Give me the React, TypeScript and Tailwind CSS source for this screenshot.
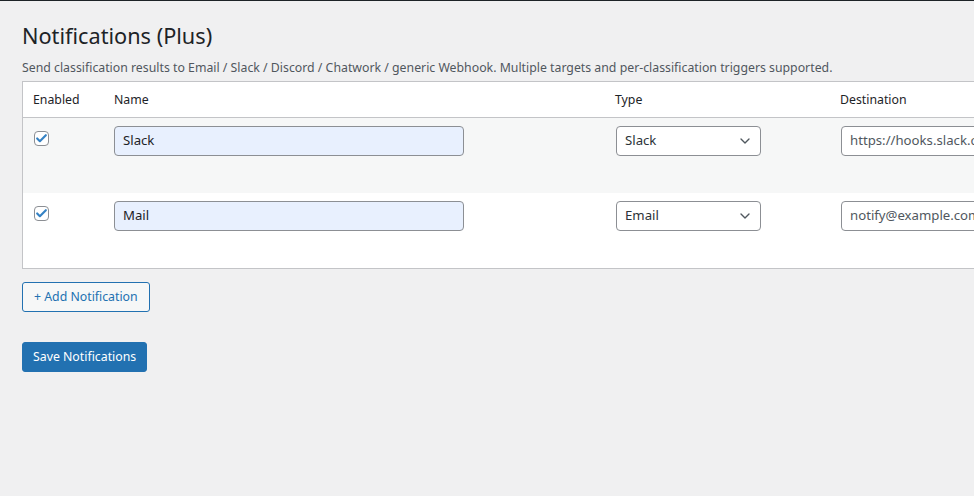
import { Check, ChevronDown } from "lucide-react";

const rows = [
  { name: "Slack", type: "Slack", dest: "https://hooks.slack.com/services/T000/B000/XXXX", bg: "bg-[#f6f7f7]" },
  { name: "Mail", type: "Email", dest: "notify@example.com", bg: "bg-white" },
];

export default function App() {
  return (
    <div
      className="min-h-screen w-full overflow-hidden bg-[#f0f0f1] border-t border-[#1d2327] text-[#3c434a] text-[12.3px]"
      style={{ fontFamily: '"Noto Sans", "Open Sans", sans-serif' }}
    >
      <div className="pl-[22px] pt-[20px]">
        <h1 className="text-[21.7px] leading-[29px] font-normal text-[#1d2327]">Notifications (Plus)</h1>
        <p className="mt-[9px] text-[12.3px] leading-[18px] text-[#50575e]">
          Send classification results to Email / Slack / Discord / Chatwork / generic Webhook. Multiple targets and per-classification triggers supported.
        </p>

        {/* Notifications table */}
        <div className="mt-[4px] w-[1100px] border border-[#c3c4c7] bg-white">
          <div className="grid grid-cols-[81px_501px_225px_1fr] h-[36px] items-center border-b border-[#c3c4c7] text-[#1d2327]">
            <span className="pl-[10px] pt-[1px]">Enabled</span>
            <span className="pl-[10px] pt-[1px]">Name</span>
            <span className="pl-[10px] pt-[1px]">Type</span>
            <span className="pl-[10px] pt-[1px]">Destination</span>
          </div>

          {rows.map((r) => (
            <div key={r.name} className={`grid grid-cols-[81px_501px_225px_1fr] h-[75px] items-start ${r.bg}`}>
              <div className="pl-[11px] pt-[13px]">
                <span className="flex h-[15px] w-[15px] items-center justify-center rounded-[4px] border border-[#8c8f94] bg-white">
                  <Check className="h-[13px] w-[13px] text-[#3582c4]" strokeWidth={4} />
                </span>
              </div>
              <div className="pl-[10px] pt-[8px]">
                <div className="flex h-[30px] w-[350px] items-center rounded-[4px] border border-[#8c8f94] bg-[#e8f0fe] px-[8px] text-[13.2px] text-[#1d2327]">
                  {r.name}
                </div>
              </div>
              <div className="pl-[11px] pt-[8px]">
                <div className="flex h-[30px] w-[145px] items-center justify-between rounded-[4px] border border-[#8c8f94] bg-white pl-[8px] pr-[7px] text-[13.2px] text-[#2c3338]">
                  <span>{r.type}</span>
                  <ChevronDown className="h-[16px] w-[16px] text-[#50575e]" strokeWidth={2} />
                </div>
              </div>
              <div className="pl-[11px] pt-[8px]">
                <div className="flex h-[30px] w-[300px] items-center overflow-hidden whitespace-nowrap rounded-[4px] border border-[#8c8f94] bg-white px-[8px] text-[13.2px] text-[#50575e]">
                  {r.dest}
                </div>
              </div>
            </div>
          ))}
        </div>

        <button className="mt-[13px] h-[30px] rounded-[3px] border border-[#2271b1] bg-[#f6f7f7] px-[11px] text-[12.3px] text-[#2271b1]">
          + Add Notification
        </button>

        <div className="mt-[30px]">
          <button className="h-[30px] rounded-[3px] border border-[#2271b1] bg-[#2271b1] px-[10px] text-[12.3px] text-white">
            Save Notifications
          </button>
        </div>
      </div>
    </div>
  );
}
